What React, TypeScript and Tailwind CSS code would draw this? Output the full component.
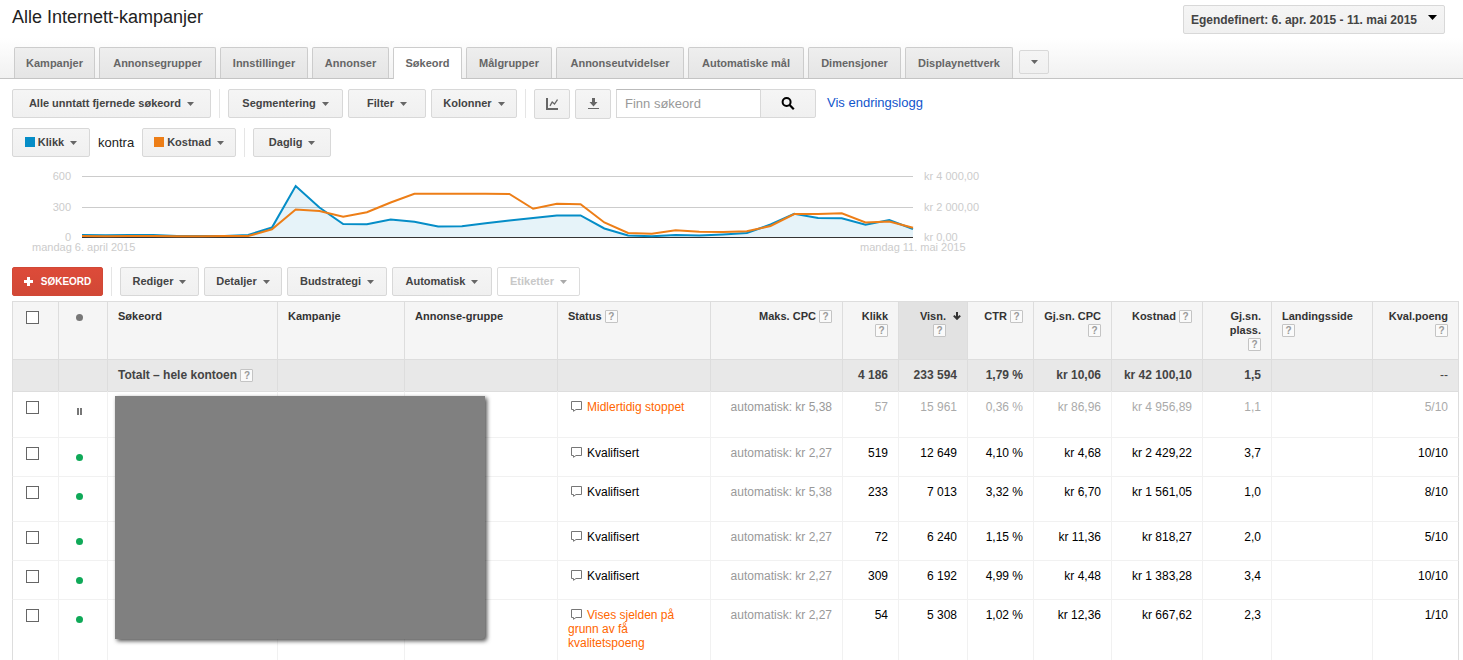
import React from "react";
import clsx from "clsx";

const tabs = [
  { label: "Kampanjer", width: "min-w-[81px]" },
  { label: "Annonsegrupper", width: "min-w-[117px]" },
  { label: "Innstillinger", width: "min-w-[88px]" },
  { label: "Annonser", width: "min-w-[77px]" },
  { label: "Søkeord", width: "min-w-[69px]", active: true },
  { label: "Målgrupper", width: "min-w-[86px]" },
  { label: "Annonseutvidelser", width: "min-w-[128px]" },
  { label: "Automatiske mål", width: "min-w-[116px]" },
  { label: "Dimensjoner", width: "min-w-[93px]" },
  { label: "Displaynettverk", width: "min-w-[108px]" },
];

const clicks = [
  20, 17, 20, 20, 10, 10, 10, 20, 93, 502, 290, 128, 125, 172, 151, 103, 106,
  135, 162, 187, 212, 212, 84, 15, 7, 20, 14, 25, 39, 123, 229, 187, 184, 121,
  167, 79,
];

const cost = [
  60, 50, 65, 60, 50, 50, 60, 60, 505, 1804, 1706, 1325, 1627, 2263, 2840, 2840,
  2834, 2834, 2821, 1850, 2178, 2152, 951, 262, 216, 440, 348, 328, 374, 722,
  1509, 1509, 1555, 951, 1017, 604,
];

type Column = {
  lines: string[];
  width: string;
  align?: "right";
  help?: "inline" | "below";
  sorted?: boolean;
};

const columns: Column[] = [
  { lines: ["Søkeord"], width: "" },
  { lines: ["Kampanje"], width: "w-[127px]" },
  { lines: ["Annonse-gruppe"], width: "w-[153px]" },
  { lines: ["Status"], width: "w-[153px]", help: "inline" },
  { lines: ["Maks. CPC"], width: "w-[132px]", align: "right", help: "inline" },
  { lines: ["Klikk"], width: "w-[56px]", align: "right", help: "below" },
  {
    lines: ["Visn."],
    width: "w-[69px]",
    align: "right",
    help: "below",
    sorted: true,
  },
  { lines: ["CTR"], width: "w-[66px]", align: "right", help: "inline" },
  { lines: ["Gj.sn. CPC"], width: "w-[78px]", align: "right", help: "below" },
  { lines: ["Kostnad"], width: "w-[91px]", align: "right", help: "inline" },
  {
    lines: ["Gj.sn.", "plass."],
    width: "w-[69px]",
    align: "right",
    help: "below",
  },
  { lines: ["Landingsside"], width: "w-[101px]", help: "below" },
  { lines: ["Kval.poeng"], width: "w-[87px]", align: "right", help: "below" },
];

const rows = [
  {
    height: "h-[46px]",
    paused: true,
    status: "Midlertidig stoppet",
    warning: true,
    maxCpc: "automatisk: kr 5,38",
    values: ["57", "15 961", "0,36 %", "kr 86,96", "kr 4 956,89", "1,1", "", "5/10"],
  },
  {
    height: "h-[39px]",
    status: "Kvalifisert",
    maxCpc: "automatisk: kr 2,27",
    values: ["519", "12 649", "4,10 %", "kr 4,68", "kr 2 429,22", "3,7", "", "10/10"],
  },
  {
    height: "h-[45px]",
    status: "Kvalifisert",
    maxCpc: "automatisk: kr 5,38",
    values: ["233", "7 013", "3,32 %", "kr 6,70", "kr 1 561,05", "1,0", "", "8/10"],
  },
  {
    height: "h-[39px]",
    status: "Kvalifisert",
    maxCpc: "automatisk: kr 2,27",
    values: ["72", "6 240", "1,15 %", "kr 11,36", "kr 818,27", "2,0", "", "5/10"],
  },
  {
    height: "h-[39px]",
    status: "Kvalifisert",
    maxCpc: "automatisk: kr 2,27",
    values: ["309", "6 192", "4,99 %", "kr 4,48", "kr 1 383,28", "3,4", "", "10/10"],
  },
  {
    height: "h-[61px]",
    status: "Vises sjelden på grunn av få kvalitetspoeng",
    warning: true,
    maxCpc: "automatisk: kr 2,27",
    values: ["54", "5 308", "1,02 %", "kr 12,36", "kr 667,62", "2,3", "", "1/10"],
  },
];

const totals = [
  "4 186",
  "233 594",
  "1,79 %",
  "kr 10,06",
  "kr 42 100,10",
  "1,5",
  "",
  "--",
];

const Caret = ({ className = "text-[#666]" }: { className?: string }) => (
  <svg width="7" height="4" viewBox="0 0 7 4" className={className}>
    <path d="M0 0h7L3.5 4z" fill="currentColor" />
  </svg>
);

const Separator = () => <span className="mx-2 h-[29px] w-px bg-[#e5e5e5]" />;

const buttonBase =
  "flex items-center justify-center rounded-[2px] border border-[#d8d8d8] bg-linear-to-b from-[#f5f5f5] to-[#f0f0f0] text-[#444]";

type MenuButtonProps = {
  label: string;
  width: string;
  swatch?: string;
  disabled?: boolean;
};

const MenuButton = ({ label, width, swatch, disabled }: MenuButtonProps) => (
  <button
    type="button"
    disabled={disabled}
    className={clsx(
      "h-[29px] gap-[6px] text-[11px] font-bold whitespace-nowrap",
      disabled
        ? "flex items-center justify-center rounded-[2px] border border-[#dcdcdc] bg-white text-[#c8c8c8]"
        : buttonBase,
      width
    )}
  >
    <span className="flex items-center gap-[3px]">
      {swatch && <span className={clsx("mb-[2px] size-[10px]", swatch)} />}
      {label}
    </span>
    <Caret className={disabled ? "text-[#aaa]" : "text-[#666]"} />
  </button>
);

const Help = () => (
  <button
    type="button"
    aria-label="Hjelp"
    className="mt-px inline-flex size-[13px] items-center justify-center rounded-[1px] border border-[#c4c4c4] bg-[#fafafa] align-top text-[10px] leading-none font-bold text-[#999]"
  >
    ?
  </button>
);

const CheckBox = ({ label }: { label: string }) => (
  <input
    type="checkbox"
    aria-label={label}
    className="block size-[13px] appearance-none border border-[#666] bg-white checked:bg-[#666]"
  />
);

const Bubble = () => (
  <svg
    width="14"
    height="11"
    viewBox="0 0 14 11"
    className="mt-px mr-[5px] inline-block align-top"
  >
    <path
      d="M3.5 .5h10v8H8L5.5 10.3V8.5h-2z"
      fill="none"
      stroke="#777"
      strokeWidth="1"
    />
  </svg>
);

const Chart = () => {
  const left = 70;
  const base = 70;
  const step = 831 / 35;
  const toPoints = (values: number[], max: number) =>
    values
      .map((v, i) => `${left + i * step},${base - (v / max) * 61}`)
      .join(" ");
  const clickPoints = toPoints(clicks, 600);

  return (
    <svg
      width="970"
      height="90"
      viewBox="0 0 970 90"
      className="block font-['Liberation_Sans',Arial,sans-serif] text-[11px]"
    >
      <path d="M70 9.5h831M70 40.5h831" stroke="#ccc" />
      <polygon
        points={`${left},${base} ${clickPoints} ${left + 831},${base}`}
        fill="#058dc7"
        fillOpacity="0.1"
      />
      <path d="M70 70.5h831" stroke="#333" />
      <polyline points={clickPoints} fill="none" stroke="#058dc7" strokeWidth="2" />
      <polyline
        points={toPoints(cost, 4000)}
        fill="none"
        stroke="#ed7e17"
        strokeWidth="2"
      />
      <g fill="#ccc">
        <g textAnchor="end">
          <text x="59" y="13">600</text>
          <text x="59" y="44">300</text>
          <text x="59" y="74">0</text>
        </g>
        <text x="912" y="13">kr 4 000,00</text>
        <text x="912" y="44">kr 2 000,00</text>
        <text x="912" y="74">kr 0,00</text>
        <text x="20" y="84">mandag 6. april 2015</text>
        <text x="848" y="84">mandag 11. mai 2015</text>
      </g>
    </svg>
  );
};

const HeaderCell = ({ column }: { column: Column }) => {
  const { lines, align, help, sorted } = column;
  return (
    <th
      className={clsx(
        "h-[58px] border-t border-l border-[#ddd] pt-[7px] align-top text-[11px] leading-[14px] font-bold text-[#333] last:border-r",
        align === "right" ? "text-right" : "text-left",
        sorted ? "bg-[#e2e2e2] pr-[6px]" : "px-[10px]"
      )}
    >
      <div className={clsx(sorted && "flex justify-end gap-[7px]")}>
        <div>
          {lines.map((line, i) => (
            <React.Fragment key={line}>
              {i > 0 && <br />}
              {line}
            </React.Fragment>
          ))}
          {help === "inline" && " "}
          {help === "below" && <br />}
          {help && <Help />}
        </div>
        {sorted && (
          <svg width="8" height="8" viewBox="0 0 8 8" className="mt-[3px]">
            <path
              d="M4 0v7M.8 3.6L4 6.8l3.2-3.2"
              fill="none"
              stroke="#333"
              strokeWidth="2"
            />
          </svg>
        )}
      </div>
    </th>
  );
};

const KeywordTable = () => {
  const cell = "border-t border-l border-[#f1f1f1] align-top";
  const totalCell =
    "h-[32px] border-t border-l border-[#ddd] px-[10px] pt-[8px] align-top last:border-r last:font-normal";

  return (
    <div className="relative mt-[5px] mr-1 ml-3">
      <table className="w-full table-fixed border-separate border-spacing-0 text-xs leading-[14px]">
        <colgroup>
          <col className="w-[46px]" />
          <col className="w-[49px]" />
          {columns.map((c) => (
            <col key={c.lines[0]} className={c.width} />
          ))}
        </colgroup>
        <thead className="bg-[#f5f5f5]">
          <tr>
            <th className="border-t border-l border-[#ddd] pt-[9px] pl-[13px] align-top">
              <CheckBox label="Velg alle" />
            </th>
            <th className="border-t border-l border-[#ddd] pt-[12px] pl-[17px] align-top">
              <span className="block size-[7px] rounded-full bg-[#777]" />
            </th>
            {columns.map((c) => (
              <HeaderCell key={c.lines[0]} column={c} />
            ))}
          </tr>
        </thead>
        <tbody>
          <tr className="bg-[#e8e8e8] font-bold text-[#444]">
            <td className={totalCell} />
            <td className={totalCell} />
            <td className={clsx(totalCell, "whitespace-nowrap")}>
              Totalt – hele kontoen <Help />
            </td>
            <td className={totalCell} />
            <td className={totalCell} />
            <td className={totalCell} />
            <td className={totalCell} />
            {totals.map((value, i) => (
              <td key={i} className={clsx(totalCell, "text-right whitespace-nowrap")}>
                {value}
              </td>
            ))}
          </tr>
          {rows.map((row, r) => {
            const top = r === 0 ? "border-t-[#ddd]" : "";
            return (
              <tr key={r} className={row.height}>
                <td className={clsx(cell, top, "border-l-[#ddd] pt-[9px] pl-[13px]")}>
                  <CheckBox label={`Velg rad ${r + 1}`} />
                </td>
                <td className={clsx(cell, top, "pt-[16px] pl-[17px]")}>
                  {row.paused ? (
                    <span className="ml-px block h-[7px] w-[5px] border-x-2 border-[#777]" />
                  ) : (
                    <span className="block size-[7px] rounded-full bg-[#0fa958]" />
                  )}
                </td>
                <td className={clsx(cell, top)} />
                <td className={clsx(cell, top)} />
                <td className={clsx(cell, top)} />
                <td
                  className={clsx(
                    cell,
                    top,
                    "px-[10px] pt-[8px]",
                    row.warning ? "text-[#f60]" : "text-black"
                  )}
                >
                  <Bubble />
                  {row.status}
                </td>
                <td
                  className={clsx(
                    cell,
                    top,
                    "px-[10px] pt-[8px] text-right whitespace-nowrap text-[#999]"
                  )}
                >
                  {row.maxCpc}
                </td>
                {row.values.map((value, i) => (
                  <td
                    key={i}
                    className={clsx(
                      cell,
                      top,
                      "px-[10px] pt-[8px] text-right whitespace-nowrap last:border-r last:border-r-[#ddd]",
                      row.paused ? "text-[#aaa]" : "text-black"
                    )}
                  >
                    {value}
                  </td>
                ))}
              </tr>
            );
          })}
        </tbody>
      </table>
      {/* Cover over the keyword and campaign names */}
      <div className="absolute top-[95px] left-[103px] h-[243px] w-[370px] rounded-br-[3px] bg-[#808080] shadow-[2px_2px_4px_rgba(0,0,0,0.7)]" />
    </div>
  );
};

const App = () => {
  return (
    <div className="bg-white font-['Liberation_Sans',Arial,sans-serif] text-[13px] text-[#222]">
      <header className="flex items-start justify-between pt-[5px] pr-[18px] pb-1 pl-3">
        <h1 className="text-lg leading-6">Alle Internett-kampanjer</h1>
        <button
          type="button"
          className={clsx(
            buttonBase,
            "h-[29px] gap-[11px] px-[7px] text-xs font-bold whitespace-nowrap"
          )}
        >
          Egendefinert: 6. apr. 2015 - 11. mai 2015
          <svg width="9" height="5" viewBox="0 0 9 5" className="mb-1">
            <path d="M0 0h9L4.5 5z" fill="#000" />
          </svg>
        </button>
      </header>

      <nav className="flex h-[41px] items-end gap-1 border-b border-[#c4c4c4] bg-linear-to-b from-white to-[#f1f1f1] pl-[14px]">
        {tabs.map((tab) => (
          <button
            key={tab.label}
            type="button"
            className={clsx(
              "rounded-t-[2px] border border-b-0 border-[#ccc] text-[11px] font-bold whitespace-nowrap text-[#666]",
              tab.active
                ? "-mb-px h-8 bg-white"
                : "h-[31px] bg-linear-to-b from-[#eee] to-[#e5e5e5]",
              tab.width
            )}
          >
            {tab.label}
          </button>
        ))}
        <button
          type="button"
          aria-label="Flere faner"
          className={clsx(buttonBase, "mb-1 ml-[2px] h-6 w-[30px]")}
        >
          <Caret />
        </button>
      </nav>

      <div className="mt-[10px] flex items-start pl-3">
        <MenuButton label="Alle unntatt fjernede søkeord" width="w-[199px]" />
        <Separator />
        <div className="flex gap-[5px]">
          <MenuButton label="Segmentering" width="w-[115px]" />
          <MenuButton label="Filter" width="w-[78px]" />
          <MenuButton label="Kolonner" width="w-[86px]" />
        </div>
        <Separator />
        <div className="flex items-start gap-[5px]">
          <button
            type="button"
            aria-label="Vis diagram"
            className={clsx(buttonBase, "h-[30px] w-9")}
          >
            <svg width="12" height="12" viewBox="0 0 12 12">
              <path d="M1 0v11h11" fill="none" stroke="#666" strokeWidth="2" />
              <path
                d="M4 7.8L6.2 4l2.3 2L11.5 1.5"
                fill="none"
                stroke="#666"
                strokeWidth="1.3"
              />
            </svg>
          </button>
          <button
            type="button"
            aria-label="Last ned"
            className={clsx(buttonBase, "h-[30px] w-9")}
          >
            <svg width="11" height="12" viewBox="0 0 11 12" fill="#666">
              <path d="M4 0h3v4h2.5L5.5 8.5 1.5 4H4zM0 10h11v1H0z" />
            </svg>
          </button>
          <form className="flex">
            <input
              type="text"
              aria-label="Finn søkeord"
              placeholder="Finn søkeord"
              className="h-[29px] w-[145px] border border-[#d8d8d8] border-t-[#bbb] px-2 text-[13px] placeholder:text-[#999]"
            />
            <button
              type="button"
              aria-label="Søk"
              className={clsx(buttonBase, "-ml-px h-[29px] w-14 rounded-l-none")}
            >
              <svg width="14" height="13" viewBox="0 0 14 13">
                <circle
                  cx="5.6"
                  cy="5"
                  r="4"
                  fill="none"
                  stroke="#000"
                  strokeWidth="2"
                />
                <path d="M8.6 8l4.2 4.2" stroke="#000" strokeWidth="2.2" />
              </svg>
            </button>
          </form>
        </div>
        <a href="#" className="ml-[11px] leading-[28px] text-[#15c]">
          Vis endringslogg
        </a>
      </div>

      <div className="mt-[9px] flex items-center pl-3">
        <MenuButton label="Klikk" width="w-[78px]" swatch="bg-[#058dc7]" />
        <span className="mx-2">kontra</span>
        <MenuButton label="Kostnad" width="w-[94px]" swatch="bg-[#ed7e17]" />
        <Separator />
        <MenuButton label="Daglig" width="w-[78px]" />
      </div>

      <div className="mt-[10px] pl-3">
        <Chart />
      </div>

      <div className="mt-[10px] flex items-start pl-3">
        <button
          type="button"
          className="flex h-[29px] w-[91px] items-center justify-center gap-2 rounded-[2px] border border-[#d14836] bg-linear-to-b from-[#dd4b39] to-[#d14836] text-[10px] font-bold text-white"
        >
          <svg width="9" height="9" viewBox="0 0 9 9">
            <path d="M4.5 0v9M0 4.5h9" stroke="#fff" strokeWidth="3" />
          </svg>
          SØKEORD
        </button>
        <Separator />
        <div className="flex gap-[5px]">
          <MenuButton label="Rediger" width="w-[79px]" />
          <MenuButton label="Detaljer" width="w-[78px]" />
          <MenuButton label="Budstrategi" width="w-[100px]" />
          <MenuButton label="Automatisk" width="w-[100px]" />
          <MenuButton label="Etiketter" width="w-[83px]" disabled />
        </div>
      </div>

      <KeywordTable />
    </div>
  );
};

export default App;
